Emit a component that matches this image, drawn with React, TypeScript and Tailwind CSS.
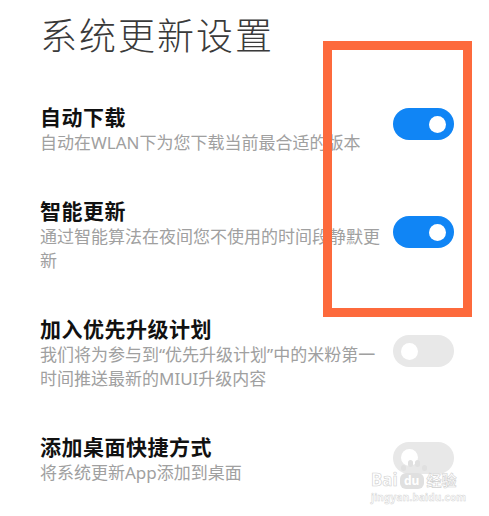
type Item = {
  title: string
  desc: string
  on: boolean
  lift: string
}

const items: Item[] = [
  { title: '自动下载', desc: '自动在WLAN下为您下载当前最合适的版本', on: true, lift: 'mb-[10px]' },
  { title: '智能更新', desc: '通过智能算法在夜间您不使用的时间段静默更新', on: true, lift: 'mb-[6px]' },
  {
    title: '加入优先升级计划',
    desc: '我们将为参与到“优先升级计划”中的米粉第一时间推送最新的MIUI升级内容',
    on: false,
    lift: 'mb-[4px]',
  },
  { title: '添加桌面快捷方式', desc: '将系统更新App添加到桌面', on: false, lift: 'mb-[3px]' },
]

function Toggle({ on, lift }: { on: boolean; lift: string }) {
  return (
    <div
      className={`flex h-[32px] w-[61px] shrink-0 items-center rounded-full px-[8px] ${lift} ${
        on ? 'justify-end bg-[#1085f5]' : 'justify-start bg-[#e8e8e8]'
      }`}
    >
      <div className="h-[17px] w-[17px] rounded-full bg-white" />
    </div>
  )
}

function Watermark() {
  // baidu jingyan stamp in the lower right corner
  return (
    <div className="pointer-events-none absolute left-[371px] top-[471px] flex flex-col items-start text-white">
      <div className="flex items-end">
        <span className="text-[17px] font-bold leading-[18px] [-webkit-text-stroke:0.6px_#cfcfcf]">Bai</span>
        <div className="relative ml-[2px] flex h-[16px] w-[24px] items-center justify-center rounded-[6px] bg-[#e0e0e0]">
          <span className="text-[12px] font-bold leading-none text-white">du</span>
          <div className="absolute -top-[13px] left-[1px] flex gap-[2px]">
            <div className="mt-[5px] h-[6px] w-[5px] rounded-full bg-[#e0e0e0]" />
            <div className="h-[7px] w-[5px] rounded-full bg-[#e0e0e0]" />
            <div className="h-[7px] w-[5px] rounded-full bg-[#e0e0e0]" />
            <div className="mt-[5px] h-[6px] w-[5px] rounded-full bg-[#e0e0e0]" />
          </div>
        </div>
        <span className="ml-[3px] text-[15px] font-bold leading-[18px] [-webkit-text-stroke:0.6px_#cfcfcf]">经验</span>
      </div>
      <span className="mt-[2px] text-[10px] font-bold leading-[12px] tracking-[0.2px] [-webkit-text-stroke:0.5px_#d4d4d4]">
        jingyan.baidu.com
      </span>
    </div>
  )
}

export default function App() {
  return (
    <div className="relative h-[516px] w-[489px] overflow-hidden bg-white font-['Noto_Sans','Noto_Sans_CJK_SC',sans-serif]">
      <div className="pl-[40px] pr-[35px] pt-[14px]">
        <h1 className="text-[37px] font-light leading-[44px] tracking-[2px] text-[#3a3a3a]">系统更新设置</h1>

        <div className="mt-[45px] flex flex-col gap-[42px]">
          {items.map((it) => (
            <div key={it.title} className="flex items-center justify-between">
              <div className="w-[342px]">
                <div className="text-[21px] font-semibold leading-[28px] tracking-[0.5px] text-[#111]">{it.title}</div>
                <div className="text-[17px] leading-[24px] text-[#a0a0a0]">{it.desc}</div>
              </div>
              <Toggle on={it.on} lift={it.lift} />
            </div>
          ))}
        </div>
      </div>

      {/* highlight box */}
      <div className="pointer-events-none absolute left-[323px] top-[41px] h-[276px] w-[149px] border-[9px] border-[#fd6a3c]" />

      <Watermark />
    </div>
  )
}
